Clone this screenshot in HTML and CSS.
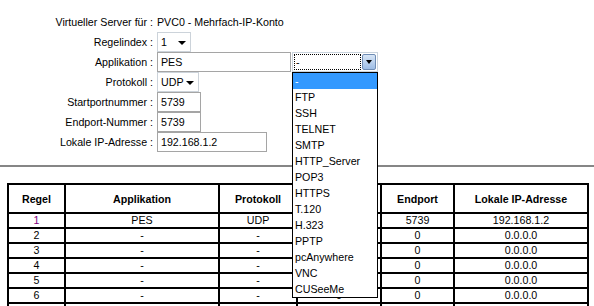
FILE: index.html
```html
<!DOCTYPE html>
<html lang="de">
<head>
    <meta charset="UTF-8">
    <title>Virtueller Server</title>
    <link rel="stylesheet" href="styles.css">
</head>
<body>
    <div class="form">
        <div class="label">Virtueller Server für :</div>
        <div class="value">PVC0 - Mehrfach-IP-Konto</div>

        <div class="label">Regelindex :</div>
        <div class="value"><span class="select w-idx">1<i class="arrow"></i></span></div>

        <div class="label">Applikation :</div>
        <div class="value">
            <span class="input w-app">PES</span>
            <span class="combo">
                <span class="focus">-</span>
                <span class="combo-btn"><i class="arrow"></i></span>
                <ul class="list">
                    <li class="sel">-</li>
                    <li>FTP</li>
                    <li>SSH</li>
                    <li>TELNET</li>
                    <li>SMTP</li>
                    <li>HTTP_Server</li>
                    <li>POP3</li>
                    <li>HTTPS</li>
                    <li>T.120</li>
                    <li>H.323</li>
                    <li>PPTP</li>
                    <li>pcAnywhere</li>
                    <li>VNC</li>
                    <li>CUSeeMe</li>
                </ul>
            </span>
        </div>

        <div class="label">Protokoll :</div>
        <div class="value"><span class="select w-proto">UDP<i class="arrow"></i></span></div>

        <div class="label">Startportnummer :</div>
        <div class="value"><span class="input w-port">5739</span></div>

        <div class="label">Endport-Nummer :</div>
        <div class="value"><span class="input w-port">5739</span></div>

        <div class="label">Lokale IP-Adresse :</div>
        <div class="value"><span class="input w-ip">192.168.1.2</span></div>
    </div>

    <hr class="sep">

    <table class="rules">
        <colgroup>
            <col style="width:57px">
            <col style="width:154px">
            <col style="width:78px">
            <col style="width:84px">
            <col style="width:73px">
            <col style="width:134px">
        </colgroup>
        <tr>
            <th>Regel</th>
            <th>Applikation</th>
            <th>Protokoll</th>
            <th>Startport</th>
            <th>Endport</th>
            <th>Lokale IP-Adresse</th>
        </tr>
        <tr>
            <td class="idx">1</td><td>PES</td><td>UDP</td><td>5739</td><td>5739</td><td>192.168.1.2</td>
        </tr>
        <tr><td>2</td><td>-</td><td>-</td><td>0</td><td>0</td><td>0.0.0.0</td></tr>
        <tr><td>3</td><td>-</td><td>-</td><td>0</td><td>0</td><td>0.0.0.0</td></tr>
        <tr><td>4</td><td>-</td><td>-</td><td>0</td><td>0</td><td>0.0.0.0</td></tr>
        <tr><td>5</td><td>-</td><td>-</td><td>0</td><td>0</td><td>0.0.0.0</td></tr>
        <tr><td>6</td><td>-</td><td>-</td><td>0</td><td>0</td><td>0.0.0.0</td></tr>
        <tr><td>7</td><td>-</td><td>-</td><td>0</td><td>0</td><td>0.0.0.0</td></tr>
    </table>
</body>
</html>
```

FILE: styles.css
```css
body {
    margin: 0;
    font-family: "Liberation Sans", Arial, sans-serif;
    font-size: 10.67px;
    color: #000;
    background: #fff;
    overflow: hidden;
}

.form {
    display: grid;
    grid-template-columns: 153px auto;
    grid-auto-rows: 20px;
    column-gap: 4px;
    margin-top: 12px;
}

.label {
    text-align: right;
    line-height: 20px;
    white-space: nowrap;
}

.value {
    display: flex;
    align-items: center;
    gap: 1px;
    line-height: 20px;
}

.input,
.select {
    box-sizing: border-box;
    height: 20px;
    line-height: 18px;
    padding: 0 3px;
    background: #fff;
}

.input {
    border: 1px solid #a5a5a5;
}

.select {
    position: relative;
    border: 1px solid #ccd3da;
}

.select .arrow {
    position: absolute;
    right: 4px;
    top: 8px;
}

.arrow {
    width: 0;
    height: 0;
    border-left: 4px solid transparent;
    border-right: 4px solid transparent;
    border-top: 4px solid #000;
}

.w-idx { width: 34px; }
.w-proto { width: 42px; }
.w-app { width: 134px; }
.w-port { width: 44px; }
.w-ip { width: 110px; }

.combo {
    position: relative;
    box-sizing: border-box;
    width: 86px;
    height: 20px;
    border: 1px solid #c9d3dd;
    display: flex;
    align-items: stretch;
    padding: 1px;
    gap: 1px;
}

.focus {
    flex: 1;
    border: 1px dotted #000;
    line-height: 14px;
    padding-left: 1px;
}

.combo-btn {
    width: 14px;
    box-sizing: border-box;
    border: 1px solid #6f8db5;
    border-radius: 2px;
    background: linear-gradient(#d8e6f6, #9dbde6);
    display: flex;
    align-items: center;
    justify-content: center;
}

.combo-btn .arrow {
    border-left-width: 3px;
    border-right-width: 3px;
    border-top-width: 4px;
}

.list {
    position: absolute;
    left: -1px;
    top: 19px;
    width: 86px;
    box-sizing: border-box;
    margin: 0;
    padding: 0;
    list-style: none;
    border: 1px solid #000;
    background: #fff;
    z-index: 2;
}

.list li {
    height: 16px;
    line-height: 16px;
    padding-left: 2px;
}

.list .sel {
    background: #3399ff;
    color: #fff;
}

.sep {
    margin: 13px 0 0 0;
    border: 0;
    height: 2px;
    background: #868686;
}

.rules {
    margin: 16px 0 0 7px;
    table-layout: fixed;
    border-collapse: separate;
    border-spacing: 0;
    border: 1px solid #000;
    width: 580px;
}

.rules th,
.rules td {
    border: 1px solid #000;
    padding: 0;
    text-align: center;
    white-space: nowrap;
    overflow: hidden;
}

.rules th {
    height: 27px;
    font-weight: bold;
}

.rules td {
    height: 13px;
    line-height: 13px;
}

.rules .idx {
    color: #800080;
}
```
